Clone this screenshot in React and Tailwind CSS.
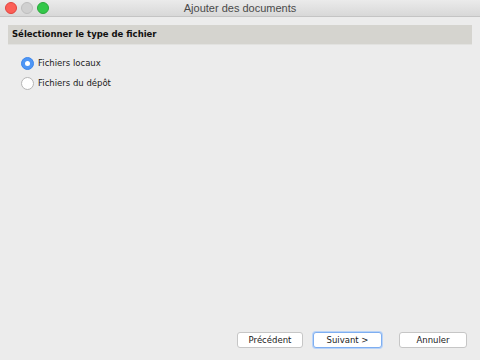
import React from 'react';

const Light = ({ color, border }) => (
    <span className={`w-3 h-3 rounded-full border ${color} ${border}`}></span>
);

const Radio = ({ checked, label }) => (
    <label className="flex items-center gap-[4px] h-[13px]">
        {checked ? (
            <span className="w-[13px] h-[13px] rounded-full bg-[#4e96f5] border border-[#3d86eb] flex items-center justify-center">
                <span className="w-[5px] h-[5px] rounded-full bg-white"></span>
            </span>
        ) : (
            <span className="w-[13px] h-[13px] rounded-full bg-white border border-[#b5b5b5]"></span>
        )}
        <span className="text-[8.5px] text-[#1a1a1a]">{label}</span>
    </label>
);

const Button = ({ label, primary, width }) => (
    <button
        className={`${width} h-[16px] rounded-[3px] bg-white text-[8.5px] text-[#1a1a1a] flex items-center justify-center ${primary ? 'border border-[#7eaef0] shadow-[0_0_0_1px_#b9d3f7]' : 'border border-[#c6c6c6]'}`}
    >
        {label}
    </button>
);

export default function App() {
    return (
        <div className="w-[480px] h-[360px] bg-[#ececec] flex flex-col font-['DejaVu_Sans',sans-serif] overflow-hidden">
            <div className="h-[17px] shrink-0 relative flex items-center justify-center bg-gradient-to-b from-[#ebebeb] to-[#d8d8d8] border-b border-[#c4c4c4]">
                <div className="absolute left-[5px] top-[2px] flex gap-[4px]">
                    <Light color="bg-[#fc5f57]" border="border-[#e0443e]" />
                    <Light color="bg-[#d0d0d0]" border="border-[#bebebe]" />
                    <Light color="bg-[#34c84a]" border="border-[#2aa73c]" />
                </div>
                <span className="text-[11px] text-[#4a4a4a] font-['Liberation_Sans',sans-serif]">Ajouter des documents</span>
            </div>
            <div className="flex-1 flex flex-col px-[8px] pt-[8px] pb-[12px]">
                <div className="h-[20px] bg-[#d5d4cf] border-b border-[#e2e2e0] flex items-center px-[4px]">
                    <span className="text-[8.5px] font-bold text-[#111]">Sélectionner le type de fichier</span>
                </div>
                <div className="flex flex-col gap-[7px] pl-[13px] pt-[12px]">
                    <Radio checked label="Fichiers locaux" />
                    <Radio label="Fichiers du dépôt" />
                </div>
                <div className="flex-1"></div>
                <div className="flex justify-end items-center pr-[5px]">
                    <Button label="Précédent" width="w-[66px]" />
                    <div className="w-[10px]"></div>
                    <Button label="Suivant >" width="w-[69px]" primary />
                    <div className="w-[17px]"></div>
                    <Button label="Annuler" width="w-[68px]" />
                </div>
            </div>
        </div>
    );
}
